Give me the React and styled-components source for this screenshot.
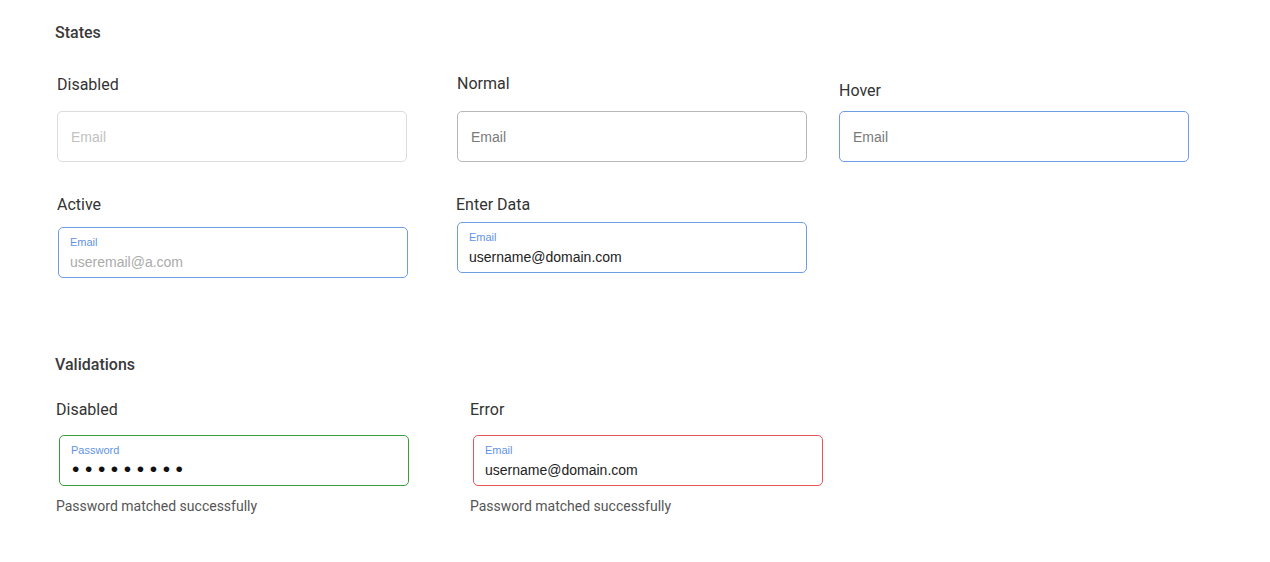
import React from "react";
import styled, { createGlobalStyle, css } from "styled-components";

const Global = createGlobalStyle`
  html, body { margin: 0; padding: 0; background: #ffffff; }
  body { font-family: Roboto, "Noto Sans", sans-serif; color: #333; }
`;

const Page = styled.main`
  padding: 24px 0 40px 55px;
`;

const Heading = styled.h2`
  margin: ${(p) => p.$mt || 0}px 0 0 0;
  font-size: 16px;
  line-height: 18px;
  font-weight: 500;
  color: #3a3a3a;
`;

const Row = styled.div`
  display: flex;
  align-items: ${(p) => (p.$bottom ? "flex-end" : "flex-start")};
  margin-top: ${(p) => p.$mt}px;
`;

const Field = styled.div`
  display: flex;
  flex-direction: column;
  width: 354px;
  margin-left: ${(p) => p.$ml || 0}px;
`;

const Label = styled.div`
  font-size: 16px;
  line-height: 19px;
  padding-top: 1px;
  color: #333;
  margin-bottom: ${(p) => p.$gap}px;
`;

const borderColors = {
  disabled: "#dcdcdc",
  normal: "#b8b8b8",
  hover: "#6e9de6",
  active: "#6e9de6",
  filled: "#6e9de6",
  success: "#3a9d3a",
  error: "#e65555",
};

const Box = styled.div`
  box-sizing: border-box;
  width: 350px;
  height: 51px;
  margin-left: ${(p) => p.$ml || 0}px;
  border: 1px solid ${(p) => borderColors[p.$state]};
  border-radius: 5px;
  background: #fff;
  font-family: "Liberation Sans", Arial, sans-serif;
  ${(p) =>
    p.$floating
      ? css`
          padding: 8px 11px 0 11px;
        `
      : css`
          display: flex;
          align-items: center;
          padding: 0 13px;
        `}
`;

const Placeholder = styled.span`
  font-size: 14px;
  color: ${(p) => (p.$muted ? "#c2c2c2" : "#7a7a7a")};
`;

const FloatLabel = styled.div`
  font-size: 11px;
  line-height: 13px;
  color: #5f93e6;
`;

const Value = styled.div`
  margin-top: 4px;
  font-size: 14px;
  line-height: 18px;
  color: ${(p) => (p.$muted ? "#ababab" : "#222")};
`;

const Dots = styled.div`
  margin-top: 2px;
  margin-left: 1px;
  font-size: 21px;
  line-height: 19px;
  letter-spacing: 5.6px;
  color: #111;
`;

const Helper = styled.div`
  margin-top: 12px;
  font-size: 14px;
  line-height: 17px;
  color: #555;
`;

export default function App() {
  return (
    <>
      <Global />
      <Page>
        <Heading>States</Heading>
        <Row $bottom $mt={31}>
          <Field $ml={2}>
            <Label $gap={17}>Disabled</Label>
            <Box $state="disabled">
              <Placeholder $muted>Email</Placeholder>
            </Box>
          </Field>
          <Field $ml={46}>
            <Label $gap={18}>Normal</Label>
            <Box $state="normal">
              <Placeholder>Email</Placeholder>
            </Box>
          </Field>
          <Field $ml={28}>
            <Label $gap={11}>Hover</Label>
            <Box $state="hover">
              <Placeholder>Email</Placeholder>
            </Box>
          </Field>
        </Row>
        <Row $mt={32}>
          <Field $ml={2}>
            <Label $gap={13}>Active</Label>
            <Box $state="active" $floating $ml={1}>
              <FloatLabel>Email</FloatLabel>
              <Value $muted>useremail@a.com</Value>
            </Box>
          </Field>
          <Field $ml={45}>
            <Label $gap={8}>Enter Data</Label>
            <Box $state="filled" $floating $ml={1}>
              <FloatLabel>Email</FloatLabel>
              <Value>username@domain.com</Value>
            </Box>
          </Field>
        </Row>

        <Heading $mt={78}>Validations</Heading>
        <Row $mt={25}>
          <Field $ml={1}>
            <Label $gap={16}>Disabled</Label>
            <Box $state="success" $floating $ml={3}>
              <FloatLabel>Password</FloatLabel>
              <Dots>•••••••••</Dots>
            </Box>
            <Helper>Password matched successfully</Helper>
          </Field>
          <Field $ml={60}>
            <Label $gap={16}>Error</Label>
            <Box $state="error" $floating $ml={3}>
              <FloatLabel>Email</FloatLabel>
              <Value>username@domain.com</Value>
            </Box>
            <Helper>Password matched successfully</Helper>
          </Field>
        </Row>
      </Page>
    </>
  );
}
